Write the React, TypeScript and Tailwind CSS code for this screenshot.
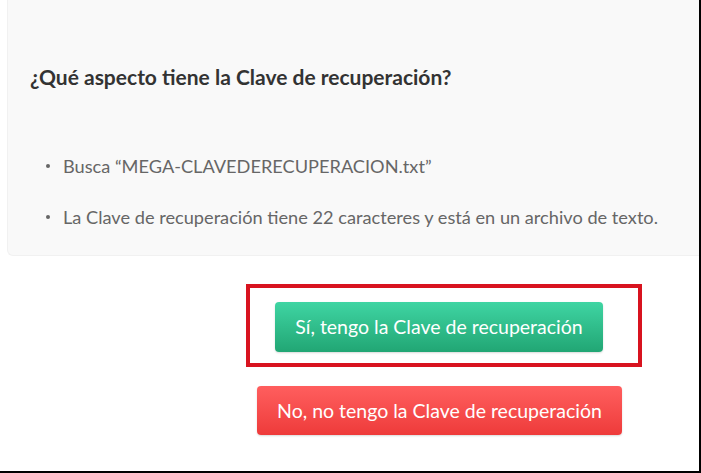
import React from "react";

export default function App() {
  return (
    <div className="box-border w-[701px] h-[473px] bg-white border-r-2 border-b-2 border-black overflow-hidden font-['Lato','Open_Sans',sans-serif]">
      <div className="ml-[7px] h-[256px] bg-[#f9f9f9] rounded-bl-[6px] border-l border-b border-[#f1f1f1] pl-[22px] pt-[64px]">
        <h2 className="text-[21px] leading-[26px] font-bold text-[#333333]">
          ¿Qué aspecto tiene la Clave de recuperación?
        </h2>
        <ul className="mt-[65px] flex flex-col gap-[29px] text-[18.2px] leading-[22px] text-[#666666]">
          <li className="flex items-center">
            <span className="ml-[16px] w-[4px] h-[4px] rounded-full bg-[#666666]" />
            <span className="ml-[13px]">Busca “MEGA-CLAVEDERECUPERACION.txt”</span>
          </li>
          <li className="flex items-center">
            <span className="ml-[16px] w-[4px] h-[4px] rounded-full bg-[#666666]" />
            <span className="ml-[13px]">
              La Clave de recuperación tiene 22 caracteres y está en un archivo de texto.
            </span>
          </li>
        </ul>
      </div>

      <div className="ml-[246px] mt-[28px] w-[396px] h-[83px] border-[4px] border-[#d8131f] pl-[25px] pt-[14px]">
        <button className="w-[328px] h-[50px] rounded-[4px] bg-gradient-to-b from-[#3fd5a3] to-[#21a674] text-white text-[19.5px] shadow-[0_1px_2px_rgba(0,0,0,0.15)]">
          Sí, tengo la Clave de recuperación
        </button>
      </div>

      <button className="block ml-[257px] mt-[19px] w-[365px] h-[49px] rounded-[4px] bg-gradient-to-b from-[#ff5e5e] to-[#ee3a3a] text-white text-[19.5px] shadow-[0_1px_2px_rgba(0,0,0,0.15)]">
        No, no tengo la Clave de recuperación
      </button>
    </div>
  );
}
